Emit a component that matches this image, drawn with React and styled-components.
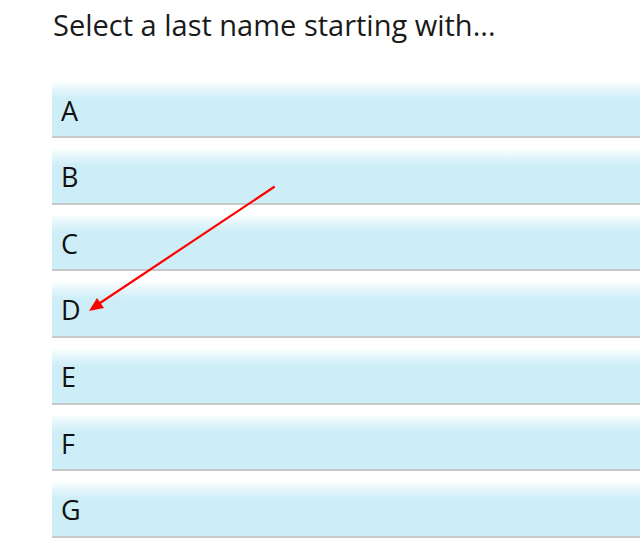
import React from "react";
import styled, { createGlobalStyle } from "styled-components";

const Global = createGlobalStyle`
  html, body { margin: 0; padding: 0; background: #ffffff; }
  body { font-family: "Open Sans", "Liberation Sans", sans-serif; color: #1a1a1a; }
`;

const Page = styled.div`
  position: relative;
  width: 640px;
  height: 542px;
  overflow: hidden;
  padding-left: 52px;
  box-sizing: border-box;
`;

const Heading = styled.h1`
  margin: 0;
  padding-top: 6px;
  font-size: 29px;
  font-weight: 400;
  line-height: 37px;
  padding-left: 1px;
  color: #1a1a1a;
`;

const List = styled.div`
  margin-top: 38px;
  display: flex;
  flex-direction: column;
  gap: 9.67px;
`;

const Row = styled.div`
  height: 57px;
  box-sizing: border-box;
  padding: 3px 0 0 9px;
  display: flex;
  align-items: center;
  font-size: 27px;
  background: linear-gradient(to bottom, #ffffff 0px, #e6f7fb 8px, #cdeef7 18px, #cdeef7 100%);
  border-bottom: 2px solid #c8c8c8;
  margin-right: -20px;
  color: #111;
`;

const Annotation = styled.svg`
  position: absolute;
  left: 0;
  top: 0;
  pointer-events: none;
`;

const letters = ["A", "B", "C", "D", "E", "F", "G"];

export default function App() {
  return (
    <>
      <Global />
      <Page>
        <Heading>Select a last name starting with...</Heading>
        <List>
          {letters.map((l) => (
            <Row key={l}>{l}</Row>
          ))}
        </List>
        <Annotation width="640" height="542" viewBox="0 0 640 542">
          <line x1="274" y1="187" x2="100" y2="303" stroke="#ff0000" strokeWidth="2.2" strokeLinecap="round" />
          <polygon points="89,311 97,298 104,308" fill="#ff0000" />
        </Annotation>
      </Page>
    </>
  );
}
